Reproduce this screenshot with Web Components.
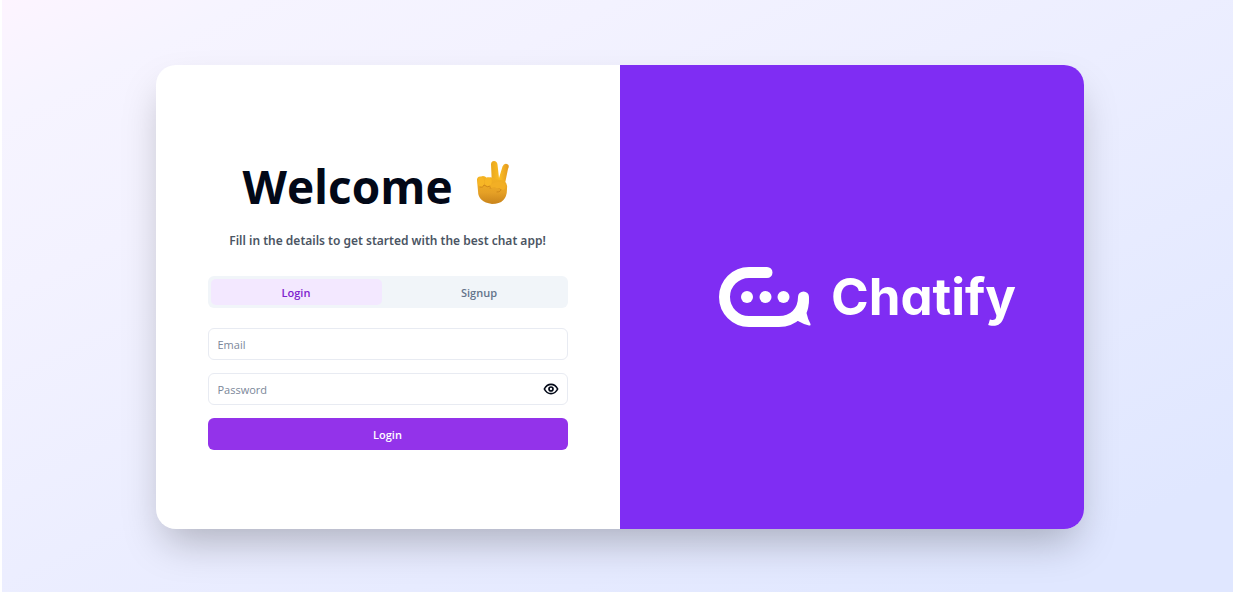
<!DOCTYPE html>
<html lang="en">
<head>
<meta charset="utf-8">
<meta name="viewport" content="width=device-width, initial-scale=1">
<title>Chatify</title>
<style>
html,body{height:100%}
body{margin:0;background:#fff;font-family:"Open Sans","Noto Sans",sans-serif;color:#020817}
</style>
</head>
<body>
<auth-page>
  <auth-card>
    <welcome-header heading="Welcome">Fill in the details to get started with the best chat app!</welcome-header>
    <login-form></login-form>
    <brand-logo slot="brand">Chatify</brand-logo>
  </auth-card>
</auth-page>
<script>
const define = (name, html, setup) => customElements.define(name, class extends HTMLElement {
  constructor() {
    super();
    this.attachShadow({mode: 'open'}).innerHTML = html;
  }
  connectedCallback() { if (setup) setup(this.shadowRoot, this); }
});

define('auth-page', `
<style>
:host{display:flex;min-height:100vh;box-sizing:border-box;margin-left:2px;padding:2px 0 0 4px;align-items:center;justify-content:center;background:linear-gradient(to bottom right,#fdf4ff 0%,#f6f4ff 10%,#f3f2ff 25%,#e0e7ff 90%)}
main{width:76%;max-width:928px}
</style>
<main><slot></slot></main>`);

define('auth-card', `
<style>
:host{display:grid;grid-template-columns:1fr 1fr;border-radius:20px;background:#fff;box-shadow:0 20px 40px -8px rgba(0,0,0,.26);overflow:hidden}
section{padding:77px 52px 79px;min-width:0}
aside{display:flex;align-items:center;justify-content:center;padding-left:32px;background:#7f2df3}
@media(max-width:800px){:host{grid-template-columns:1fr}aside{display:none}section{padding:40px 24px}}
</style>
<section><slot></slot></section>
<aside><slot name="brand"></slot></aside>`);

define('welcome-header', `
<style>
:host{display:block;text-align:center}
div{display:flex;align-items:center;justify-content:center}
h1{margin:0;font:700 46px/64px "Open Sans",sans-serif;padding-top:8px}
svg{width:80px;height:80px;flex:none}
p{margin:8px 0 24px;font:600 12px/22px "Noto Sans",sans-serif;color:#4b5563;white-space:nowrap}
@media(max-width:500px){p{white-space:normal}}
</style>
<div><h1></h1>
<svg viewBox="0 0 80 80" role="img" aria-label="Victory hand">
<defs>
<linearGradient id="palm" x1="0" y1="0" x2="0" y2="1"><stop offset="0" stop-color="#f5b421"/><stop offset=".6" stop-color="#e5a026"/><stop offset="1" stop-color="#c9841b"/></linearGradient>
<linearGradient id="finger" x1="0" y1="0" x2="1" y2="0"><stop offset="0" stop-color="#e9a81e"/><stop offset=".5" stop-color="#fbbd24"/><stop offset="1" stop-color="#e2981e"/></linearGradient>
</defs>
<path d="M39 44 38 22.500Q38 19 41 19T44.500 22.500L46 36 49.500 24.500Q51 21 54 22T55 27L51.500 44Z" fill="url(#finger)"/>
<path d="M24 38Q24 34 28 34.500 31 33 34 36 39 34 42 37L49 38Q55 40 54 47 54 62 39 62 25 60 25 49Z" fill="url(#palm)"/>
<path d="M25 38Q26 34 29 35.500Q32 37 31 42Q30 46 27 45Q24 43 25 38ZM32 38Q33 34 37 36Q40 38 38 43Q36 46 33 44Q31 42 32 38Z" fill="#f7b625"/>
<path d="M27 45Q30 46 31 43Q34 46 38 44M37 46Q44 44 48 47Q48 50 44 50" fill="none" stroke="#cf8719" stroke-width="1" stroke-linecap="round"/>
<path d="M37 43Q46 37 52 42Q54 46 50 48Q45 45 38 46Z" fill="#f2af25"/>
</svg></div>
<p><slot></slot></p>`, (root, host) => { root.querySelector('h1').textContent = host.getAttribute('heading'); });

define('login-form', `
<style>
:host{display:block}
*{box-sizing:border-box}
button,input{font:400 11px/16px "Open Sans",sans-serif}
button{border:0;padding:0;cursor:pointer}
.tabs{display:grid;grid-template-columns:1fr 1fr;gap:12px;height:32px;padding:3px;margin-bottom:20px;border-radius:6px;background:#f1f5f9}
.tabs button{padding-top:2px;border-radius:5px;background:none;color:#64748b;font-weight:600}
.tabs button[aria-selected=true]{background:#f3e8ff;color:#7e22ce}
form{display:grid;gap:13px}
.field{display:flex;align-items:center;height:32px;border:1px solid #e8ebf2;border-radius:6px;background:#fff}
.field:focus-within{border-color:#9333ea}
input{flex:1;min-width:0;height:100%;padding:0 9px;border:0;outline:0;background:none;color:#020817}
input::placeholder{color:#7b8799;opacity:1}
.eye{display:flex;margin-right:8px;background:none;color:#020817}
svg{width:16px;height:16px}
.submit{height:32px;padding-top:2px;border-radius:6px;background:#9333ea;color:#fff;font-weight:600}
</style>
<div class="tabs" role="tablist"><button type="button" role="tab" aria-selected="true">Login</button><button type="button" role="tab" aria-selected="false">Signup</button></div>
<form>
<div class="field"><input type="email" aria-label="Email" placeholder="Email"></div>
<div class="field"><input class="password" type="password" aria-label="Password" placeholder="Password"><button type="button" class="eye" aria-label="Show password"><svg viewBox="0 0 24 24" fill="none" stroke="currentColor" stroke-width="2.500" stroke-linecap="round" stroke-linejoin="round"><path d="M2 12s3.500-7 10-7 10 7 10 7-3.500 7-10 7S2 12 2 12Z"/><circle cx="12" cy="12" r="3"/></svg></button></div>
<button class="submit">Login</button>
</form>`, root => {
  const tabs = root.querySelectorAll('[role=tab]');
  tabs.forEach(tab => tab.addEventListener('click', () => {
    tabs.forEach(t => t.setAttribute('aria-selected', t === tab));
    root.querySelector('.submit').textContent = tab.textContent;
  }));
  const password = root.querySelector('.password');
  root.querySelector('.eye').addEventListener('click', () => { password.type = password.type === 'password' ? 'text' : 'password'; });
  root.querySelector('form').addEventListener('submit', e => e.preventDefault());
});

define('brand-logo', `
<style>
:host{display:flex;align-items:center;gap:20px;color:#fff;font:700 51px/64px Inter,sans-serif;font-feature-settings:"cv11"}
svg{width:92px;height:60px;flex:none}
</style>
<svg viewBox="0 0 92 60" aria-hidden="true">
<path d="M48 5.500H30a24.500 24.500 0 0 0 0 49H60C74 54.500 84.500 45 84.500 30" fill="none" stroke="#fff" stroke-width="11" stroke-linecap="round"/>
<path d="M90 30C90 38 89 43 87.500 46Q89 53 91.500 57Q92 59 90 58.500Q84 57 79 54L72 54 80 38Z" fill="#fff"/>
<circle cx="28" cy="30" r="6" fill="#fff"/><circle cx="46.500" cy="30" r="6" fill="#fff"/><circle cx="64.500" cy="30" r="6" fill="#fff"/>
</svg>
<span><slot></slot></span>`);
</script>
</body>
</html>
